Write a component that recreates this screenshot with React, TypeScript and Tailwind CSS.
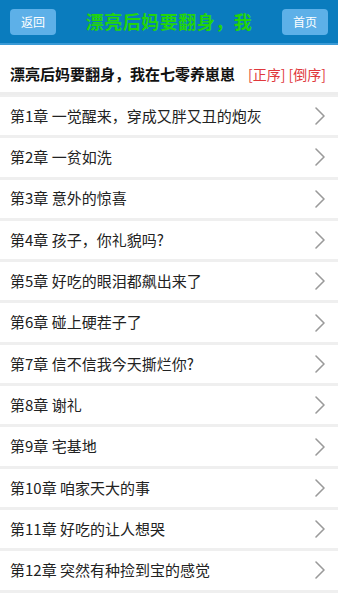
import React from "react";

const chapters = [
  "第1章 一觉醒来，穿成又胖又丑的炮灰",
  "第2章 一贫如洗",
  "第3章 意外的惊喜",
  "第4章 孩子，你礼貌吗?",
  "第5章 好吃的眼泪都飙出来了",
  "第6章 碰上硬茬子了",
  "第7章 信不信我今天撕烂你?",
  "第8章 谢礼",
  "第9章 宅基地",
  "第10章 咱家天大的事",
  "第11章 好吃的让人想哭",
  "第12章 突然有种捡到宝的感觉",
];

const font = { fontFamily: '"Noto Sans CJK SC", "Noto Sans", sans-serif' };

function Chevron() {
  return (
    <svg width="12" height="20" viewBox="0 0 12 20" fill="none">
      <path d="M2 2 L10 10 L2 18" stroke="#9a9a9a" strokeWidth="1.6" strokeLinecap="round" strokeLinejoin="round" />
    </svg>
  );
}

export default function App() {
  return (
    <div className="w-[338px] h-[600px] overflow-hidden bg-white flex flex-col" style={font}>
      <div className="h-[45px] shrink-0 bg-[#0a7cbe] border-b-2 border-[#3a9ad6] flex items-center justify-between px-[10px]">
        <div className="w-[46px] h-[26px] rounded-[4px] bg-[#5db0e8] text-white text-[12px] flex items-center justify-center">返回</div>
        <div className="text-[#22d40c] text-[18px] font-bold tracking-[0.5px]">漂亮后妈要翻身，我</div>
        <div className="w-[46px] h-[26px] rounded-[4px] bg-[#5db0e8] text-white text-[12px] flex items-center justify-center">首页</div>
      </div>
      <div className="h-[11px] shrink-0 bg-white" />
      <div className="h-[39px] shrink-0 bg-white flex items-center pl-[10px] pr-[12px] border-b-[3px] border-[#ededed]">
        <div className="text-[15px] font-bold text-[#111]">漂亮后妈要翻身，我在七零养崽崽</div>
        <div className="ml-auto text-[14px] text-[#e0383c]">[正序] [倒序]</div>
      </div>
      <div className="flex flex-col gap-[3px] pt-[2px] bg-[#efefef] pb-[3px] shrink-0">
        {chapters.map((c) => (
          <div key={c} className="h-[38.3px] bg-white flex items-center pl-[10px] pr-[12px]">
            <div className="text-[15px] text-[#222]">{c}</div>
            <div className="ml-auto">
              <Chevron />
            </div>
          </div>
        ))}
      </div>
      <div className="flex-1 bg-white" />
    </div>
  );
}
